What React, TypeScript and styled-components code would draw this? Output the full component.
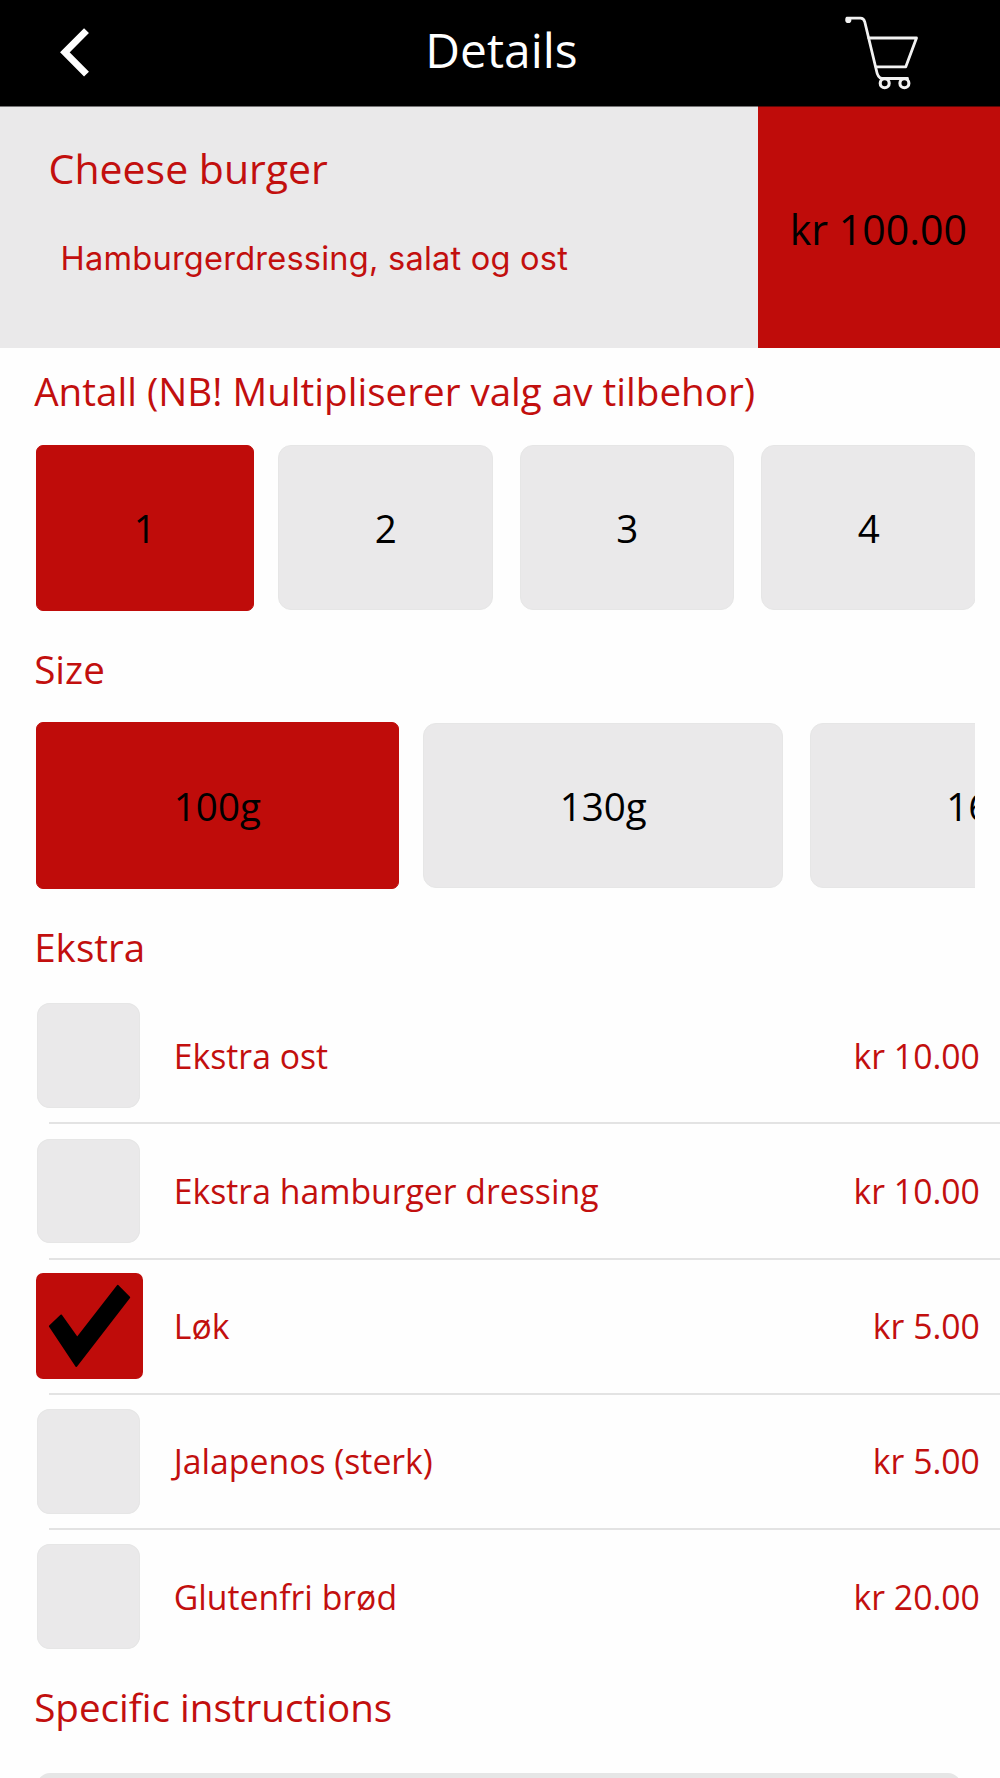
import React, { useState } from 'react';
import styled, { createGlobalStyle } from 'styled-components';

const red = '#bf0c0a';
const textRed = '#c20f0e';
const grey = '#eae9ea';
const edge = '#e6e6e6';

const GlobalStyle = createGlobalStyle`
  *, *::before, *::after { box-sizing: border-box; }
  body {
    margin: 0;
    background: #fefefe;
    font-family: 'Open Sans', 'Noto Sans', sans-serif;
    color: ${textRed};
  }
  button { font: inherit; color: inherit; border: 0; padding: 0; background: none; }
`;

const Screen = styled.main`
  width: 1000px;
  height: 1778px;
  overflow: hidden;
  display: flex;
  flex-direction: column;
`;

const NavBar = styled.header`
  flex: none;
  height: 106px;
  display: grid;
  grid-template-columns: 150px 1fr 150px;
  align-items: start;
  background: #000;
  color: #fff;
`;

const NavTitle = styled.h1`
  margin: 0 -2px 0 1px;
  text-align: center;
  font-size: 47.9px;
  font-weight: 400;
  line-height: 99px;
`;

const NavButton = styled.button`
  display: block;
  height: 106px;
  svg { display: block; }
`;

const Hero = styled.section`
  flex: none;
  display: flex;
  height: 241.7px;
`;

const Product = styled.div`
  width: 758.3px;
  padding: 41px 0 0 48.6px;
  background: ${grey};
  border-top: 1px solid rgba(0, 0, 0, 0.5);
`;

const ProductName = styled.h2`
  margin: 0;
  font-size: 41px;
  font-weight: 400;
  line-height: 40px;
`;

const Description = styled.p`
  margin: 50px 0 0 12px;
  font-family: Inter, 'Open Sans', sans-serif;
  font-size: 32.6px;
  letter-spacing: 0.21px;
  line-height: 40px;
  white-space: nowrap;
`;

const Total = styled.div`
  flex: 1;
  display: flex;
  align-items: center;
  justify-content: center;
  padding: 3px 1.6px 0 0;
  background: ${red};
  border-top: 1px solid rgba(0, 0, 0, 0.5);
  color: #000;
  font-size: 41.1px;
  line-height: 56px;
`;

const Heading = styled.h3<{ $height: number; $line: number }>`
  flex: none;
  margin: 0;
  padding-left: 34.2px;
  height: ${(p) => p.$height}px;
  line-height: ${(p) => p.$line}px;
  font-size: 38.58px;
  font-weight: 400;
`;

const Choices = styled.div`
  flex: none;
  display: flex;
  gap: 24.1px;
  height: 166.4px;
  margin: 0 24.7px 0 36.2px;
  overflow: hidden;
`;

const Choice = styled.button<{ $width: number; $selected: boolean }>`
  flex: none;
  width: ${(p) => p.$width - (p.$selected ? 0 : 2.9)}px;
  margin: ${(p) => (p.$selected ? '0' : '0.8px 2.1px 0.8px 0.8px')};
  border-radius: ${(p) => (p.$selected ? 7 : 13)}px;
  border: 1px solid ${(p) => (p.$selected ? red : edge)};
  background: ${(p) => (p.$selected ? red : grey)};
  color: #000;
  font-size: 38.6px;
  line-height: 52px;
  padding-top: 1px;
`;

const ExtraList = styled.ul`
  flex: none;
  margin: 0;
  padding: 0;
  list-style: none;
`;

const ExtraRow = styled.li`
  display: grid;
  grid-template-columns: 106.4px 1fr auto;
  column-gap: 31.2px;
  align-items: center;
  height: 133.27px;
  padding: 0 20.1px 0 36.2px;
  font-size: 33.75px;
  line-height: 46px;
`;

const Divider = styled.li`
  height: 2px;
  margin-left: 49px;
  background: #e3e3e3;
`;

const CheckBox = styled.button<{ $checked: boolean }>`
  display: block;
  width: ${(p) => (p.$checked ? 106.4 : 103.6)}px;
  height: ${(p) => (p.$checked ? 106 : 104.6)}px;
  margin-left: ${(p) => (p.$checked ? 0 : 0.7)}px;
  border-radius: ${(p) => (p.$checked ? 7 : 13)}px;
  background: ${(p) => (p.$checked ? red : grey)};
  box-shadow: ${(p) => (p.$checked ? 'none' : `inset 0 0 0 1px ${edge}`)};
  svg { display: block; }
`;

const Notes = styled.div`
  flex: none;
  height: 160px;
  margin: 0 39px 0 37px;
  border: 5px solid ${edge};
  border-radius: 13px;
`;

const BackIcon = () => (
  <svg width="150" height="106" viewBox="0 0 150 106" fill="none" stroke="#fff" strokeWidth="6.9">
    <path d="M86.5 30.6 64.9 52.3 86.5 74.2" />
  </svg>
);

const CartIcon = () => (
  <svg width="150" height="106" viewBox="850 0 150 106" overflow="visible" fill="none" stroke="#f2f2f2" strokeWidth="2.8" strokeLinejoin="round" strokeLinecap="round">
    <path d="M847 18.2H860.5Q863.8 18.2 864.8 22L876.2 69.5Q877.8 78.5 882 78.5H907.5" />
    <path d="M868.8 38H916.5L905.8 66.8H876" />
    <circle cx="848.3" cy="20" r="1.7" fill="#f2f2f2" />
    <circle cx="884.7" cy="83.2" r="4.5" strokeWidth="3.1" />
    <circle cx="904.4" cy="83.2" r="4.5" strokeWidth="3.1" />
  </svg>
);

const CheckIcon = () => (
  <svg width="106" height="106" viewBox="0 0 106 106" fill="#000" stroke="#000" strokeWidth="2" strokeLinejoin="round">
    <path d="M13.9 53.2 25.2 42.5 41.2 65.2 81.8 12.9 93.2 24.5 40.3 93Z" />
  </svg>
);

const amounts = ['1', '2', '3', '4'];
const sizes = ['100g', '130g', '160g'];
const extras = [
  { name: 'Ekstra ost', price: 'kr 10.00' },
  { name: 'Ekstra hamburger dressing', price: 'kr 10.00' },
  { name: 'Løk', price: 'kr 5.00' },
  { name: 'Jalapenos (sterk)', price: 'kr 5.00' },
  { name: 'Glutenfri brød', price: 'kr 20.00' },
];

export default function App() {
  const [amount, setAmount] = useState('1');
  const [size, setSize] = useState('100g');
  const [checked, setChecked] = useState<string[]>(['Løk']);

  const toggle = (name: string) =>
    setChecked((list) => (list.includes(name) ? list.filter((n) => n !== name) : [...list, name]));

  return (
    <Screen>
      <GlobalStyle />
      <NavBar>
        <NavButton><BackIcon /></NavButton>
        <NavTitle>Details</NavTitle>
        <NavButton><CartIcon /></NavButton>
      </NavBar>
      <Hero>
        <Product>
          <ProductName>Cheese burger</ProductName>
          <Description>Hamburgerdressing, salat og ost</Description>
        </Product>
        <Total>kr 100.00</Total>
      </Hero>

      <Heading $height={96.9} $line={87}>Antall (NB! Multipliserer valg av tilbehor)</Heading>
      <Choices>
        {amounts.map((a) => (
          <Choice key={a} $width={217.4} $selected={a === amount} onClick={() => setAmount(a)}>{a}</Choice>
        ))}
      </Choices>

      <Heading $height={111.3} $line={116}>Size</Heading>
      <Choices>
        {sizes.map((s) => (
          <Choice key={s} $width={362.4} $selected={s === size} onClick={() => setSize(s)}>{s}</Choice>
        ))}
      </Choices>

      <Heading $height={100.4} $line={117}>Ekstra</Heading>
      <ExtraList>
        {extras.map((extra, i) => (
          <React.Fragment key={extra.name}>
            {i > 0 && <Divider />}
            <ExtraRow>
              <CheckBox $checked={checked.includes(extra.name)} onClick={() => toggle(extra.name)}>
                {checked.includes(extra.name) && <CheckIcon />}
              </CheckBox>
              <span>{extra.name}</span>
              <span>{extra.price}</span>
            </ExtraRow>
          </React.Fragment>
        ))}
      </ExtraList>

      <Heading $height={109.6} $line={88}>Specific instructions</Heading>
      <Notes />
    </Screen>
  );
}
